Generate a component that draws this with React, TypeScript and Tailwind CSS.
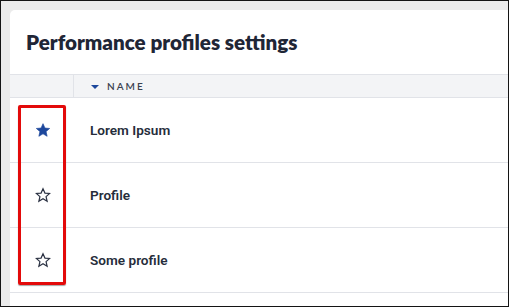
import React from 'react';

type Profile = { id: string; name: string; favourite: boolean };

const profiles: Profile[] = [
    { id: '1', name: 'Lorem Ipsum', favourite: true },
    { id: '2', name: 'Profile', favourite: false },
    { id: '3', name: 'Some profile', favourite: false },
];

const Star: React.FC<{ filled: boolean }> = ({ filled }) => (
    <svg width="16" height="16" viewBox="0 0 24 24" aria-hidden="true">
        <path
            d="M12 2.5l2.9 6.6 7.1.6-5.4 4.7 1.6 7-6.2-3.7-6.2 3.7 1.6-7L2 9.7l7.1-.6z"
            fill={filled ? '#1c479c' : 'none'}
            stroke={filled ? '#1c479c' : '#2a3142'}
            strokeWidth={filled ? 1 : 1.8}
            strokeLinejoin="miter"
        />
    </svg>
);

const App: React.FC = () => {
    return (
        <div className="relative h-[307px] w-[509px] overflow-hidden border border-[#141414] bg-[#ebebeb] pl-[9px] pt-[9px]">
            <div className="h-full rounded-tl-[5px] bg-white">
                <div className="flex h-[64px] items-center pl-4 pt-[1px]">
                    <h1 className="font-['Lato',_sans-serif] text-[20.6px] font-extrabold text-[#1f2636]">
                        Performance profiles settings
                    </h1>
                </div>

                <div className="flex h-[24px] border-y border-[#e1e3e8] bg-[#f3f4f6]">
                    <div className="w-[64px] border-r border-[#e1e3e8]" />
                    <div className="flex items-center pl-[17px]">
                        <span className="mr-[8px] mt-[1px] h-0 w-0 border-x-[4px] border-t-[4px] border-x-transparent border-t-[#1c479c]" />
                        <span className="font-['Lato',_sans-serif] text-[10px] font-semibold tracking-[2px] text-[#3a4150]">
                            NAME
                        </span>
                    </div>
                </div>

                {profiles.map(p => (
                    <div key={p.id} className="flex h-[65px] items-center border-b border-[#e1e3e8]">
                        <div className="flex w-[64px] justify-center pl-[1px]">
                            <Star filled={p.favourite} />
                        </div>
                        <span className="pl-[16px] font-['Roboto',_sans-serif] text-[13.6px] font-semibold text-[#262d3b]">
                            {p.name}
                        </span>
                    </div>
                ))}
            </div>

            {/* annotation box */}
            <div className="absolute left-[17px] top-[104px] h-[180px] w-[48px] rounded-[2px] border-[3px] border-[#e30a0a] shadow-[0_1px_1px_rgba(0,0,0,0.35)]" />
        </div>
    );
};

export default App;
